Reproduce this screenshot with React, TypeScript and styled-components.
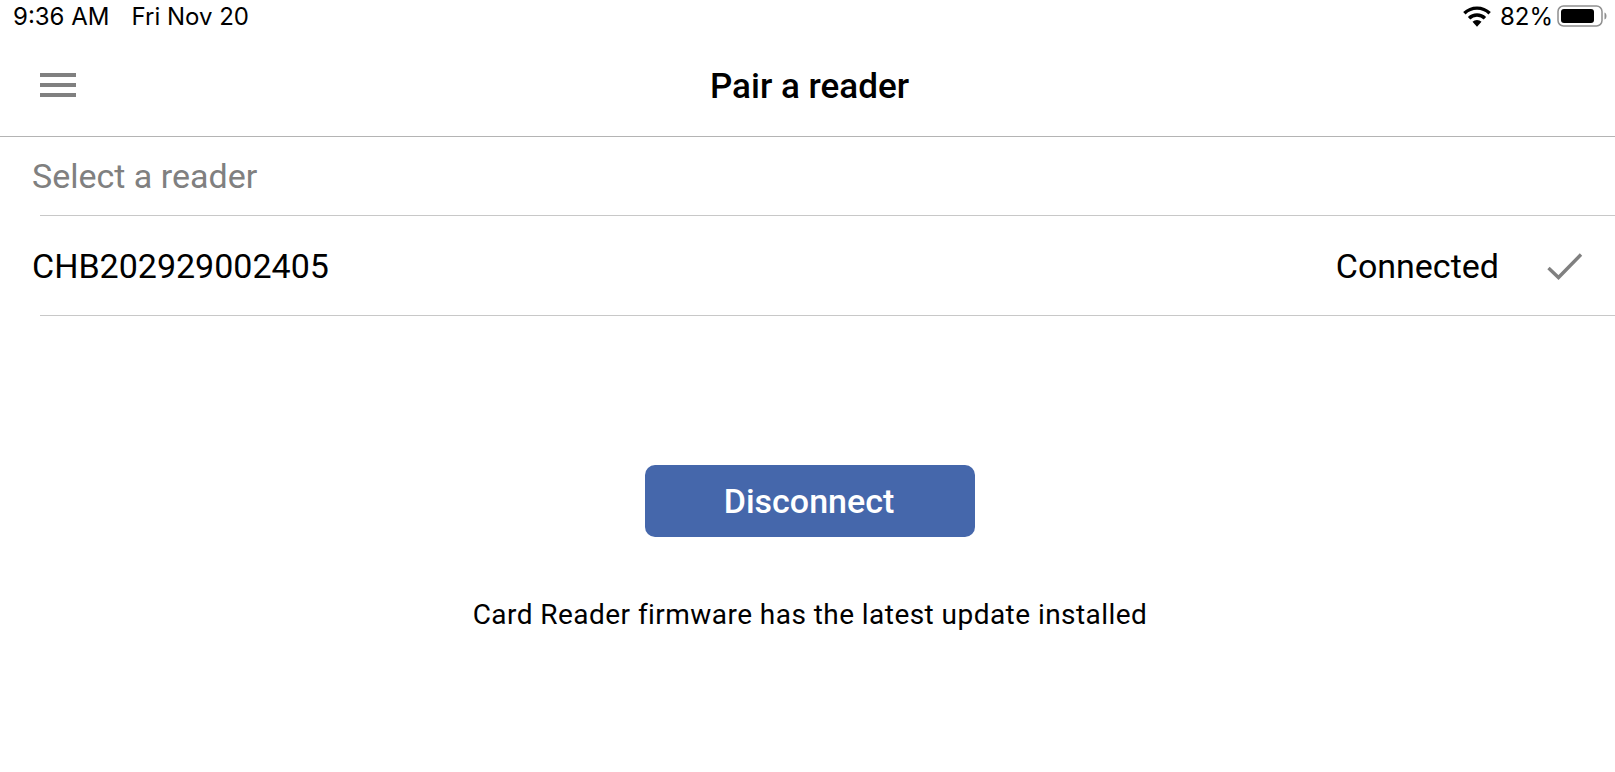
import React from "react";
import styled, { createGlobalStyle } from "styled-components";

const Global = createGlobalStyle`
  html, body { margin: 0; padding: 0; background: #fff; }
  body { font-family: Roboto, "Liberation Sans", sans-serif; color: #000; overflow: hidden; }
`;

const Page = styled.div`
  width: 1615px;
  height: 772px;
  display: flex;
  flex-direction: column;
  background: #fff;
`;

const StatusBar = styled.div`
  height: 32px;
  padding: 0 8px 0 13px;
  display: flex;
  align-items: center;
  justify-content: space-between;
  font-family: Inter, sans-serif;
  font-size: 24px;
  color: #000;
`;

const StatusGroup = styled.div<{ $gap: number }>`
  display: flex;
  align-items: center;
  gap: ${(p) => p.$gap}px;
`;

const Percent = styled.span`
  margin-left: 4px;
`;

const Header = styled.header`
  height: 105px;
  box-sizing: border-box;
  border-bottom: 1px solid #b4b4b4;
  display: grid;
  grid-template-columns: 1fr auto 1fr;
  align-items: center;
  padding: 0 36px 0 40px;
`;

const Menu = styled.div`
  width: 36px;
  margin-top: 2px;
  display: flex;
  flex-direction: column;
  gap: 6px;
`;

const MenuBar = styled.span`
  display: block;
  height: 4px;
  background: #808080;
`;

const Title = styled.h1`
  margin: 5px 0 0;
  font-size: 35px;
  font-weight: 500;
  line-height: 40px;
`;

const SectionLabel = styled.div`
  height: 78px;
  box-sizing: border-box;
  padding-left: 32px;
  display: flex;
  align-items: center;
  font-size: 34px;
  color: #808080;
`;

const Divider = styled.div`
  height: 1px;
  margin-left: 40px;
  background: #c8c8c8;
`;

const ReaderRow = styled.div`
  height: 99px;
  box-sizing: border-box;
  padding: 0 32px;
  display: flex;
  align-items: center;
  justify-content: space-between;
  font-size: 34px;
`;

const RowEnd = styled.div`
  display: flex;
  align-items: center;
  gap: 48px;
`;

const Actions = styled.div`
  display: flex;
  flex-direction: column;
  align-items: center;
  padding: 149px 0 0 5px;
`;

const Button = styled.button`
  width: 330px;
  height: 72px;
  padding: 0 2px 0 0;
  border: 0;
  border-radius: 10px;
  background: #4567ab;
  color: #fff;
  font-family: inherit;
  font-size: 34px;
  font-weight: 500;
`;

const Note = styled.p`
  margin: 62px 0 0;
  font-size: 28px;
  line-height: 32px;
  letter-spacing: 0.45px;
`;

export default function App() {
  return (
    <Page>
      <Global />
      <StatusBar>
        <StatusGroup $gap={22}>
          <span>9:36 AM</span>
          <span>Fri Nov 20</span>
        </StatusGroup>
        <StatusGroup $gap={4}>
          <svg width="30" height="22" viewBox="0 0 28 20" aria-hidden="true">
            <path d="M14 20l-4.2-4.6a6 6 0 0 1 8.4 0z" fill="#000" />
            <path d="M6.6 12.1a10.6 10.6 0 0 1 14.8 0" stroke="#000" strokeWidth="3.2" fill="none" />
            <path d="M2.2 7.4a17 17 0 0 1 23.6 0" stroke="#000" strokeWidth="3.2" fill="none" />
          </svg>
          <Percent>82%</Percent>
          <svg width="50" height="24" viewBox="0 0 50 24" aria-hidden="true">
            <rect x="1" y="2" width="44" height="20" rx="5.5" fill="none" stroke="#8f8f8f" strokeWidth="1.5" />
            <rect x="4" y="5" width="33" height="14" rx="3" fill="#000" />
            <path d="M47.5 8.5c1.5.5 2 2 2 3.5s-.5 3-2 3.5z" fill="#8f8f8f" />
          </svg>
        </StatusGroup>
      </StatusBar>
      <Header>
        <Menu>
          <MenuBar />
          <MenuBar />
          <MenuBar />
        </Menu>
        <Title>Pair a reader</Title>
      </Header>
      <SectionLabel>Select a reader</SectionLabel>
      <Divider />
      <ReaderRow>
        <span>CHB202929002405</span>
        <RowEnd>
          <span>Connected</span>
          <svg width="36" height="28" viewBox="0 0 36 28" aria-hidden="true">
            <path d="M1.5 16l10 9.5L34 2.5" fill="none" stroke="#808080" strokeWidth="3.4" />
          </svg>
        </RowEnd>
      </ReaderRow>
      <Divider />
      <Actions>
        <Button>Disconnect</Button>
        <Note>Card Reader firmware has the latest update installed</Note>
      </Actions>
    </Page>
  );
}
